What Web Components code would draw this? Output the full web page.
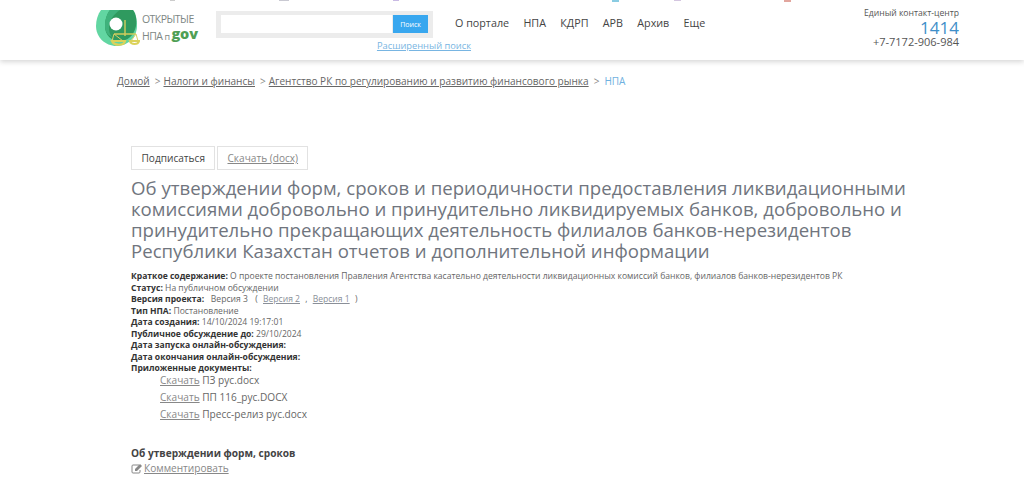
<!DOCTYPE html>
<html lang="ru">
<head>
<meta charset="utf-8">
<title>НПА</title>
<style>
  html, body { margin: 0; padding: 0; background: #fff; height: 490px; overflow: hidden; }
  body { font-family: "Open Sans", "Liberation Sans", sans-serif; color: #555; }
</style>
</head>
<body>
<site-header></site-header>
<bread-crumbs></bread-crumbs>
<npa-page></npa-page>

<script>
class SiteHeader extends HTMLElement {
  connectedCallback() {
    let shadowRoot = this.attachShadow({ mode: "open" });
    shadowRoot.innerHTML = `
    <style>
      :host { display: block; position: relative; height: 60px; box-sizing: border-box; background: #fff; box-shadow: 0 2px 5px rgba(0,0,0,.16); padding-left: 96px; padding-right: 65px; }
      .scraps { position: absolute; left: 0; top: 0; width: 100%; height: 2px; background:
        linear-gradient(#c9c9d2,#c9c9d2) 279px 0/10px 1px no-repeat,
        linear-gradient(#ccc,#ccc) 170px 0/5px 1px no-repeat,
        linear-gradient(#c9bae4,#c9bae4) 393px 0/6px 1px no-repeat,
        linear-gradient(#8acce2,#8acce2) 612px 0/7px 2px no-repeat,
        linear-gradient(#d4c6e0,#d4c6e0) 674px 0/7px 1px no-repeat,
        linear-gradient(#e2a69e,#e2a69e) 784px 0/7px 2px no-repeat; }
      .row { display: flex; height: 60px; }
      .logo { width: 119px; height: 50px; display: flex; flex: none; }
      .logo svg { flex: none; margin-top: 9px; }
      .brand { font-size: 10.5px; line-height: 14.5px; color: #7d8784; padding-left: 2px; letter-spacing: -.55px; margin-top: 12px; white-space: nowrap; }
      .brand b { color: #4f9f55; font-size: 14.5px; font-weight: 800; line-height: 14px; letter-spacing: -.1px; vertical-align: 1px; }
      .brand i { font-style: normal; font-size: 9px; margin: 0 2px 0 2px; }
      .search { width: 217px; margin-left: 1px; flex: none; }
      .box { margin-top: 11px; height: 27px; background: #ececec; padding: 4px 5px 5px 5px; box-sizing: border-box; display: flex; }
      .box span { flex: 1; background: #fff; margin-right: 1px; }
      .box b { width: 35px; background: #38a7ef; color: #fff; font-size: 7px; font-weight: 400; display: flex; align-items: center; justify-content: center; }
      .adv { display: block; text-align: right; font-size: 9.3px; line-height: 14px; color: #78b5e2; text-decoration: underline; margin-top: 1px; margin-right: -38px; }
      nav { display: flex; gap: 14.3px; font-size: 10.75px; color: #444; margin-left: 22px; padding-top: 15px; line-height: 17px; flex: 1; }
      .contact { text-align: right; color: #555; flex: none; }
      .contact .t { font-size: 8.6px; line-height: 11px; margin-top: 8px; }
      .contact .n { font-size: 17px; line-height: 18px; color: #3f8fc9; }
      .contact .p { font-size: 11px; line-height: 12px; margin-top: -1px; }
    </style>
    <div class="scraps"></div>
    <div class="row">
      <div class="logo">
        <svg width="44" height="38" viewBox="0 0 44 38">
          <path d="M5 1H37C40 5 41 11 41 17 41 28 32 37 20.500 37 9 37 0 28 0 17 0 11 2 5 5 1Z" fill="#62d6a2"/>
          <path d="M14 1H37C40 5 41 11 40 17 38 27 31 32 24 32 15 32 9 26 9 17 9 10 11 5 14 1Z" fill="#2f9a5f"/>
          <path d="M14 1H24C18 5 13 11 13 19 13 23 14 26 16 28 11 26 9 22 9 17 9 10 11 5 14 1Z" fill="#3fb27c"/>
          <circle cx="20" cy="15" r="6.500" fill="#fff"/>
          <path d="M29 11V27M18 25H40" stroke="#d2cc5c" stroke-width="1.400" fill="none"/>
          <path d="M18 25L16 32M18 25L27 32M40 25L35 32M40 25L42 32" stroke="#d8cf63" stroke-width="1" fill="none"/>
          <path d="M16 32H29C28 37 18 37 16 32ZM34 32H43C42 36 35 36 34 32Z" fill="none" stroke="#dcd25a" stroke-width="2.200"/>
        </svg>
        <div class="brand">ОТКРЫТЫЕ<br>НПА<i>п</i><b>gov</b></div>
      </div>
      <div class="search">
        <div class="box"><span></span><b>Поиск</b></div>
        <a class="adv">Расширенный поиск</a>
      </div>
      <nav><span>О портале</span><span>НПА</span><span>КДРП</span><span>АРВ</span><span>Архив</span><span>Еще</span></nav>
      <div class="contact">
        <div class="t">Единый контакт-центр</div>
        <div class="n">1414</div>
        <div class="p">+7-7172-906-984</div>
      </div>
    </div>`;
  }
}

class BreadCrumbs extends HTMLElement {
  connectedCallback() {
    let shadowRoot = this.attachShadow({ mode: "open" });
    shadowRoot.innerHTML = `
    <style>
      :host { display: block; padding: 14px 0 0 117px; font-size: 10.05px; line-height: 15px; color: #666; }
      a { color: #666; text-decoration: underline; }
      i { font-style: normal; margin: 0 3px 0 5px; color: #888; }
      .cur { color: #6fb1e0; margin-left: 2px; }
    </style>
    <a>Домой</a><i>&gt;</i><a>Налоги и финансы</a><i>&gt;</i><a>Агентство РК по регулированию и развитию финансового рынка</a><i>&gt;</i><span class="cur">НПА</span>`;
  }
}

class NpaField extends HTMLElement {
  connectedCallback() {
    let shadowRoot = this.attachShadow({ mode: "open" });
    shadowRoot.innerHTML = `
    <style>
      :host { display: block; font-size: 8.57px; line-height: 11.5px; color: #666; white-space: nowrap; }
      b { color: #333; font-weight: 700; }
    </style>
    <b>${this.getAttribute("label")}:</b> <slot></slot>`;
  }
}

class DocLink extends HTMLElement {
  connectedCallback() {
    let shadowRoot = this.attachShadow({ mode: "open" });
    shadowRoot.innerHTML = `
    <style>
      :host { display: block; font-size: 10.1px; line-height: 17.2px; color: #666; padding-left: 29px; }
      a { color: #888; text-decoration: underline; }
    </style>
    <a>Скачать</a> <slot></slot>`;
  }
}

class NpaPage extends HTMLElement {
  connectedCallback() {
    let shadowRoot = this.attachShadow({ mode: "open" });
    shadowRoot.innerHTML = `
    <style>
      :host { display: block; padding: 57px 0 0 131px; }
      .btns { display: flex; gap: 2px; height: 24px; }
      .btns span { border: 1px solid #e2e2e2; font-size: 10.1px; line-height: 22px; padding: 0 9.5px; color: #444; box-sizing: border-box; height: 24px; }
      .btns span + span { padding: 0 9px; }
      .btns a { color: #888; text-decoration: underline; }
      h1 { font-weight: 400; font-size: 18.63px; line-height: 21px; color: #70757e; margin: 7px 0 10px; width: 800px; }
      u { color: #8a8f98; }
      .sp { margin: 0 3px; }
      .docs { margin: -3px 0 23px; }
      h4 { font-size: 10.15px; line-height: 14px; font-weight: 700; color: #444; margin: 0; }
      .cmt { display: flex; align-items: center; gap: 2px; font-size: 10.1px; line-height: 15px; color: #888; text-decoration: underline; margin-top: 1px; }
    </style>
    <div class="btns"><span>Подписаться</span><span><a>Скачать (docx)</a></span></div>
    <h1>Об утверждении форм, сроков и периодичности предоставления ликвидационными комиссиями добровольно и принудительно ликвидируемых банков, добровольно и принудительно прекращающих деятельность филиалов банков-нерезидентов Республики Казахстан отчетов и дополнительной информации</h1>
    <npa-field label="Краткое содержание">О проекте постановления Правления Агентства касательно деятельности ликвидационных комиссий банков, филиалов банков-нерезидентов РК</npa-field>
    <npa-field label="Статус">На публичном обсуждении</npa-field>
    <npa-field label="Версия проекта">&nbsp; Версия 3 &nbsp;<span class="sp">(</span>&nbsp;<u>Версия 2</u><span class="sp">&nbsp;,</span>&nbsp;<u>Версия 1</u> <span class="sp">)</span></npa-field>
    <npa-field label="Тип НПА">Постановление</npa-field>
    <npa-field label="Дата создания">14/10/2024 19:17:01</npa-field>
    <npa-field label="Публичное обсуждение до">29/10/2024</npa-field>
    <npa-field label="Дата запуска онлайн-обсуждения"></npa-field>
    <npa-field label="Дата окончания онлайн-обсуждения"></npa-field>
    <npa-field label="Приложенные документы"></npa-field>
    <div class="docs">
      <doc-link>ПЗ рус.docx</doc-link>
      <doc-link>ПП 116_рус.DOCX</doc-link>
      <doc-link>Пресс-релиз рус.docx</doc-link>
    </div>
    <h4>Об утверждении форм, сроков</h4>
    <div class="cmt">
      <svg width="11" height="10" viewBox="0 0 11 10"><path d="M8 1H2Q1 1 1 2V8Q1 9 2 9H8Q9 9 9 8V6" fill="none" stroke="#888" stroke-width="1"/><path d="M4 5L9 0 11 2 6 7H4Z" fill="#888"/></svg>
      <span>Комментировать</span>
    </div>`;
  }
}

window.customElements.define("site-header", SiteHeader);
window.customElements.define("bread-crumbs", BreadCrumbs);
window.customElements.define("npa-field", NpaField);
window.customElements.define("doc-link", DocLink);
window.customElements.define("npa-page", NpaPage);
</script>
</body>
</html>
